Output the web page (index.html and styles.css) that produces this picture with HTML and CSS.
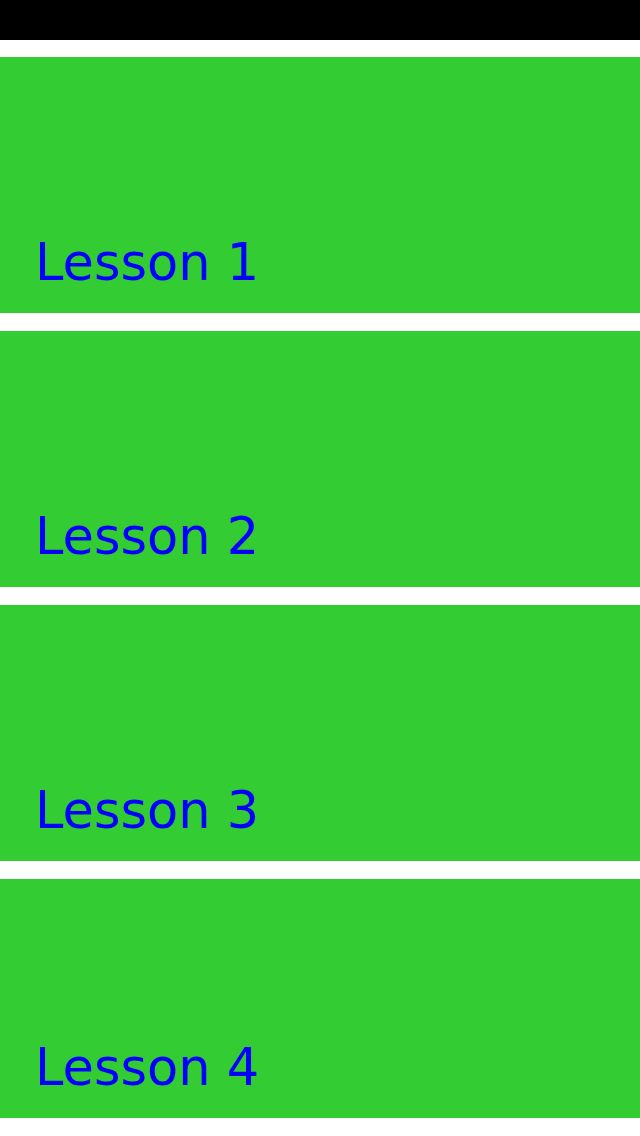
FILE: index.html
```html
<!DOCTYPE html>
<html>
<head>
<meta charset="utf-8">
<link rel="stylesheet" href="styles.css">
</head>
<body>
<div class="topbar"></div>
<div class="list">
  <div class="card"><span class="title">Lesson 1</span></div>
  <div class="card"><span class="title">Lesson 2</span></div>
  <div class="card"><span class="title">Lesson 3</span></div>
  <div class="card last"><span class="title">Lesson 4</span></div>
</div>
</body>
</html>
```
FILE: styles.css
```css
html, body {
  margin: 0;
  padding: 0;
  background: #ffffff;
  font-family: "DejaVu Sans", Verdana, sans-serif;
}
.topbar {
  height: 40px;
  background: #000000;
}
.list {
  display: flex;
  flex-direction: column;
  gap: 18px;
  padding-top: 17px;
}
.card {
  height: 256px;
  background: #33cc33;
  display: flex;
  flex-direction: column;
  justify-content: flex-end;
  padding: 0 0 21px 35px;
  box-sizing: border-box;
}
.card.last {
  height: 239px;
}
.title {
  color: #0000ff;
  font-size: 51px;
  line-height: normal;
}
```
